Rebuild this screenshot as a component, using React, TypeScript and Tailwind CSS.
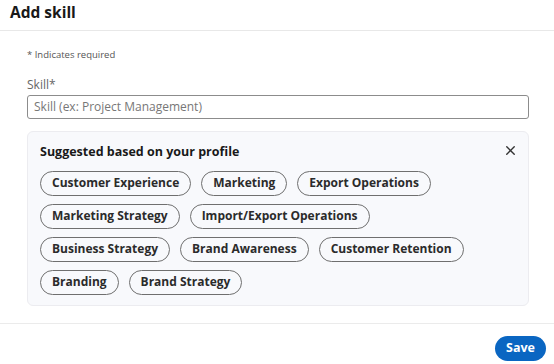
import { X } from "lucide-react";

const suggestions = [
  "Customer Experience",
  "Marketing",
  "Export Operations",
  "Marketing Strategy",
  "Import/Export Operations",
  "Business Strategy",
  "Brand Awareness",
  "Customer Retention",
  "Branding",
  "Brand Strategy",
];

export default function App() {
  return (
    <div
      className="w-[554px] h-[364px] bg-white flex flex-col text-[#1f1f1f] overflow-hidden"
      style={{ fontFamily: '"Open Sans", "Noto Sans", sans-serif' }}
    >
      {/* Header */}
      <div className="h-[31px] px-[10px] flex items-center border-b border-[#e8e8e8]">
        <h1 className="text-[15.5px] font-bold leading-none text-[#191919] -mt-[4px]">Add skill</h1>
      </div>

      {/* Body */}
      <div className="h-[292px] px-[27px] pr-[25px]">
        <p className="mt-[17px] text-[9.5px] text-[#555]">* Indicates required</p>

        <label className="block mt-[15px] text-[12px] leading-[16px] text-[#666]">Skill*</label>
        <input
          className="mt-[-1px] w-full h-[24px] rounded-[3px] border border-[#8c8c8c] px-[6px] text-[12px] placeholder:text-[#777] outline-none"
          placeholder="Skill (ex: Project Management)"
        />

        <div className="mt-[12px] rounded-[6px] border border-[#ececf0] bg-[#f8f9fc] pl-[12px] pr-[10px] pt-[11px] pb-[10px]">
          <div className="flex items-center justify-between">
            <h2 className="text-[12.5px] font-bold text-[#191919]">Suggested based on your profile</h2>
            <X size={15} strokeWidth={2.2} className="text-[#333] -mt-[4px]" />
          </div>
          <div className="mt-[9px] flex flex-wrap gap-x-[10px] gap-y-[8px] w-[440px]">
            {suggestions.map((s) => (
              <span
                key={s}
                className="h-[25px] px-[11px] inline-flex items-center rounded-full border border-[#6f6f6f] text-[12px] font-bold text-[#2b2b2b]"
              >
                {s}
              </span>
            ))}
          </div>
        </div>
      </div>

      {/* Footer */}
      <div className="flex-1 border-t border-[#ebebeb] flex items-start justify-end pt-[12px] pr-[8px]">
        <button className="h-[25px] px-[11px] rounded-full bg-[#0a66c2] text-white text-[12.5px] font-bold">
          Save
        </button>
      </div>
    </div>
  );
}
